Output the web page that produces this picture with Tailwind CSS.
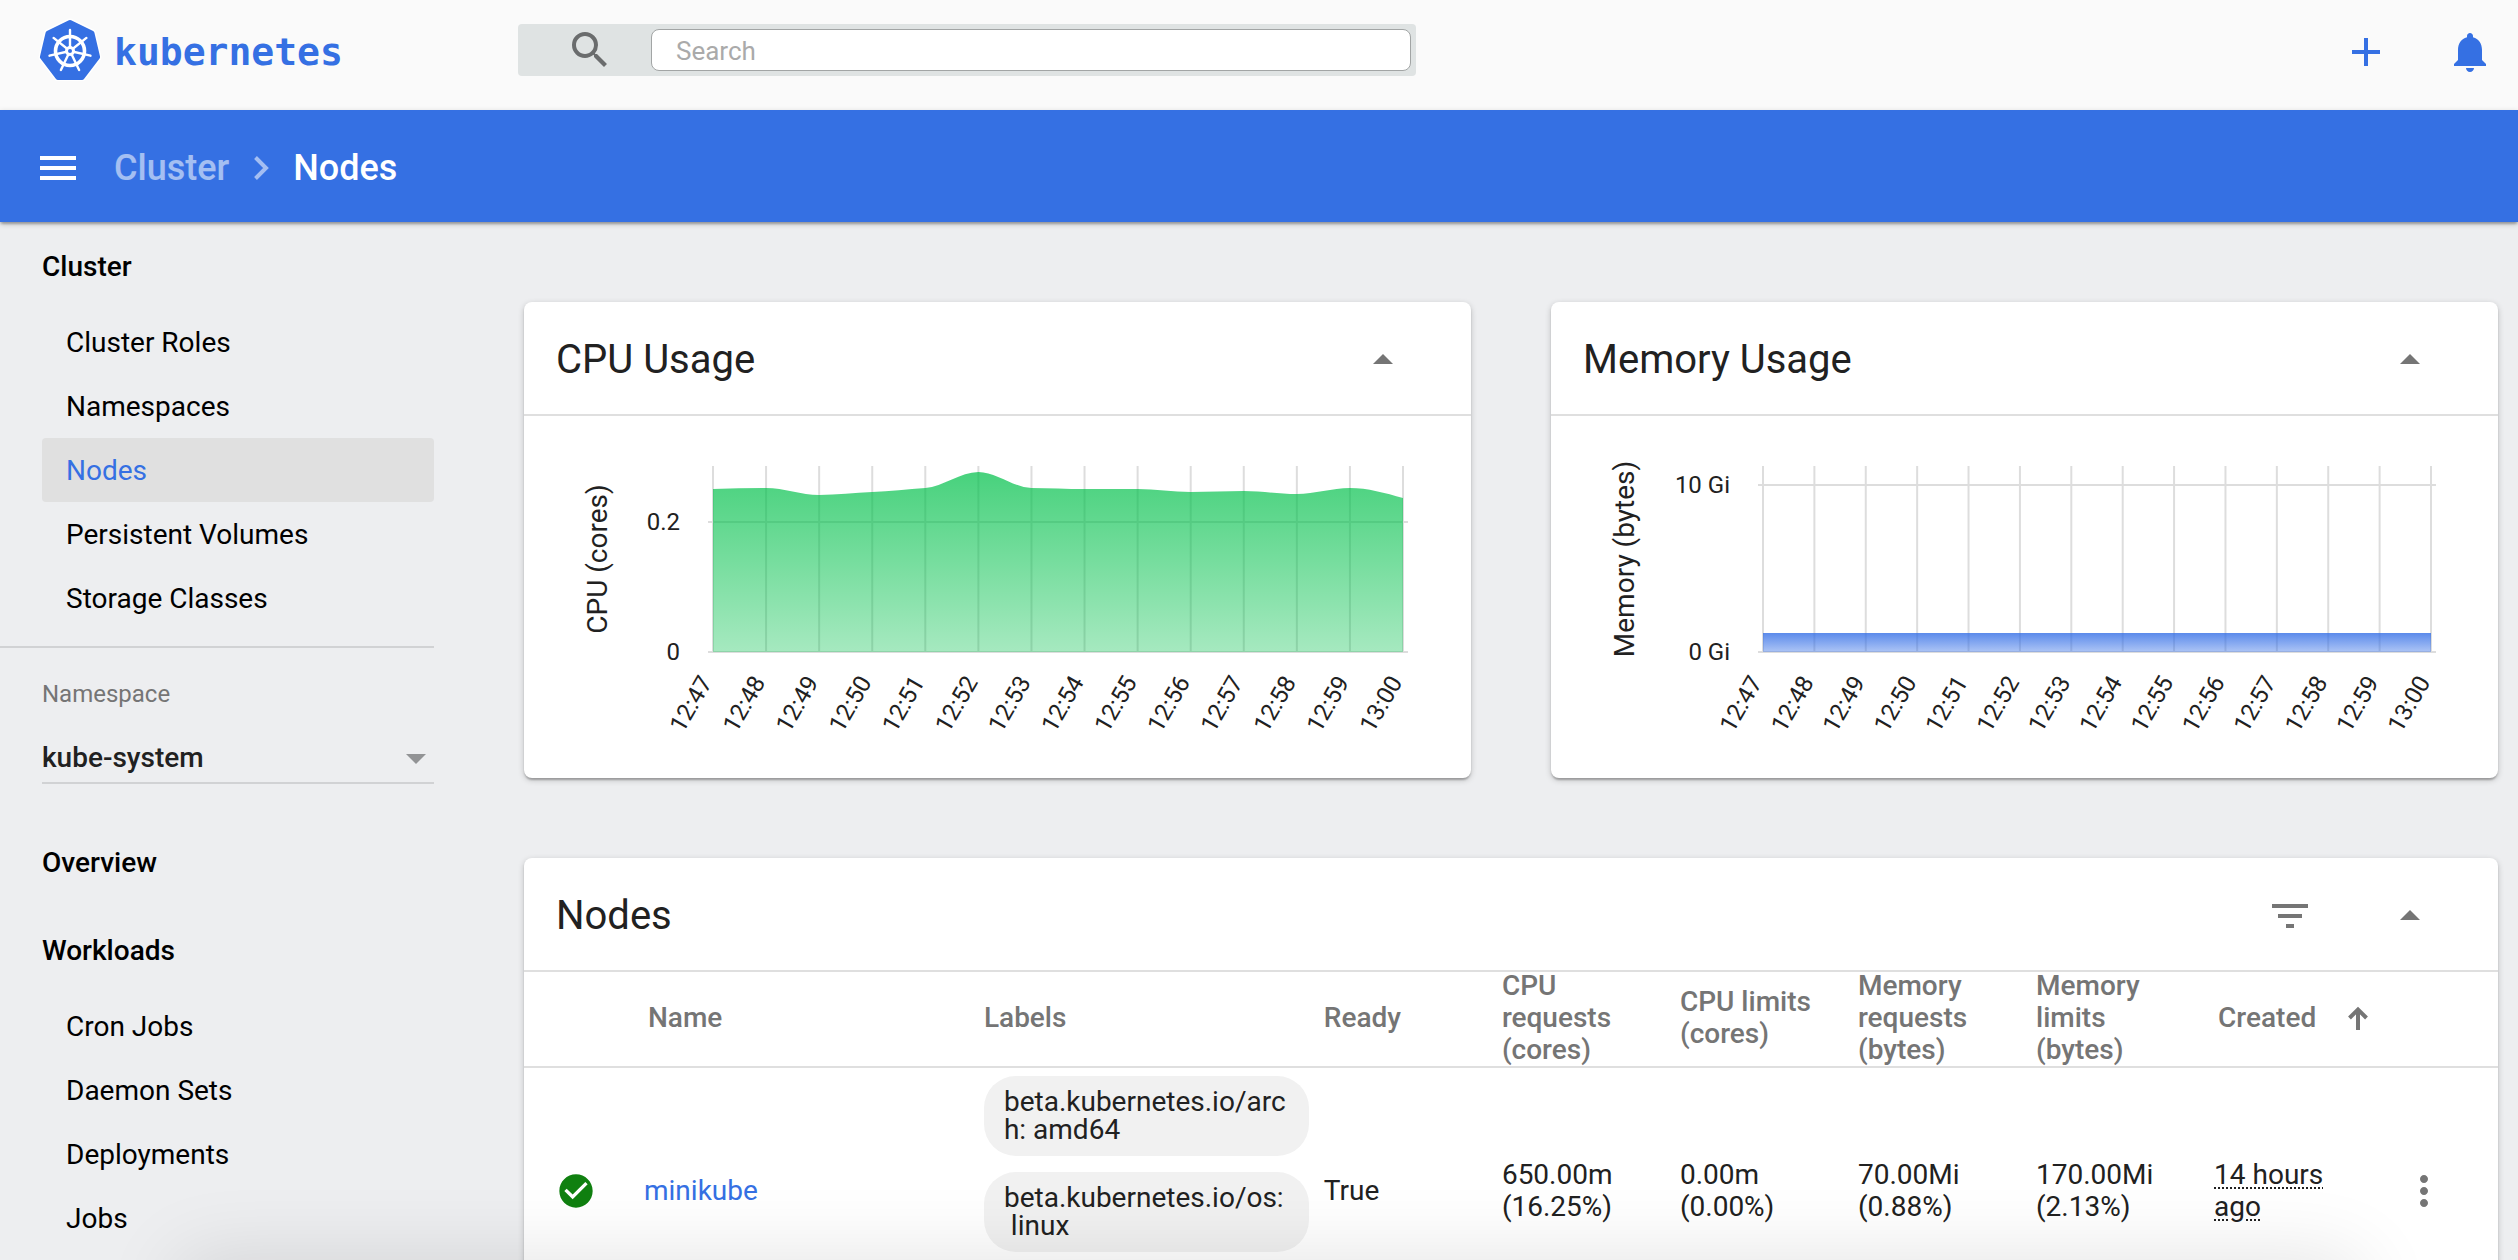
<!DOCTYPE html>
<html lang="en">
<head>
<meta charset="utf-8">
<title>Nodes - Kubernetes Dashboard</title>
<script src="https://cdn.jsdelivr.net/npm/@tailwindcss/browser@4"></script>
</head>
<body class="relative flex h-screen flex-col overflow-hidden bg-[#edeef0] font-['Roboto',sans-serif] text-[28px] leading-8 text-[#212121]">

<header class="flex h-[110px] shrink-0 items-center bg-[#fafafa] pr-6 pb-[10px]">
  <a href="#" class="flex w-[518px] shrink-0 items-center gap-[14px] pl-10 text-[#3570e3]">
    <svg class="size-[60px] overflow-visible" viewBox="0 0 60 60" aria-hidden="true">
      <path d="M30 2 52.500 13 58 37.500 42.500 57.500H17.500L2 37.500 7.500 13Z" fill="#fff" stroke="#fff" stroke-width="7" stroke-linejoin="round"/>
      <path d="M30 2.500 52 13.300 57.600 37 42 57.500H18L2.400 37 8 13.300Z" fill="#3570e3" stroke="#3570e3" stroke-width="5" stroke-linejoin="round"/>
      <g id="wheel" fill="none" stroke="#fff" stroke-linecap="round">
        <circle cx="30" cy="31" r="14.500" stroke-width="3.600"/>
      </g>
      <circle cx="30" cy="31" r="5" fill="#fff"/>
      <circle cx="30" cy="31" r="2" fill="#3570e3"/>
    </svg>
    <span class="pt-1 font-['DejaVu_Sans_Mono',monospace] text-[38px] leading-none font-bold">kubernetes</span>
  </a>
  <form class="flex h-[52px] max-w-[898px] flex-1 items-center rounded bg-[#dfe3e3] pr-[5px] pl-12" role="search">
    <label for="search" class="mr-[37px]" aria-label="Search">
      <svg class="size-12" viewBox="0 0 24 24" fill="#6a6c6d" aria-hidden="true"><path d="M15.500 14h-.79l-.28-.27A6.471 6.471 0 0 0 16 9.500 6.500 6.500 0 1 0 9.500 16c1.610 0 3.090-.59 4.230-1.570l.27.28v.79l5 4.990L20.490 19l-4.990-5zm-6 0C7.010 14 5 11.990 5 9.500S7.010 5 9.500 5 14 7.010 14 9.500 11.990 14 9.500 14z"/></svg>
    </label>
    <input id="search" type="text" placeholder="Search" aria-label="Search" class="h-[42px] min-w-0 flex-1 rounded-lg border border-[#a2a5a5] bg-white px-6 pt-0.5 text-[26px] placeholder:text-[#aaaaaa]">
  </form>
  <div class="ml-auto flex gap-14 pt-1 text-[#3570e3]">
    <button type="button" aria-label="Create"><svg class="size-12" viewBox="0 0 24 24" fill="currentColor"><path d="M19 13h-6v6h-2v-6H5v-2h6V5h2v6h6z"/></svg></button>
    <button type="button" aria-label="Notifications"><svg class="size-12" viewBox="0 0 24 24" fill="currentColor"><path d="M12 22c1.100 0 2-.9 2-2h-4c0 1.100.89 2 2 2zm6-6v-5c0-3.070-1.640-5.640-4.500-6.320V4c0-.83-.67-1.500-1.500-1.500s-1.500.67-1.500 1.500v.68C7.630 5.360 6 7.920 6 11v5l-2 2v1h16v-1l-2-2z"/></svg></button>
  </div>
</header>

<div class="relative flex h-[112px] shrink-0 items-center bg-[#3570e3] pt-1 pl-[34px] text-4xl font-medium text-white shadow-[0_2px_6px_rgba(0,0,0,.2),0_2px_2px_rgba(0,0,0,.14),0_4px_2px_-2px_rgba(0,0,0,.12)]">
  <button type="button" aria-label="Menu"><svg class="size-12" viewBox="0 0 24 24" fill="currentColor"><path d="M3 18h18v-2H3v2zm0-5h18v-2H3v2zm0-7v2h18V6H3z"/></svg></button>
  <nav class="ml-8 flex items-center gap-6" aria-label="Breadcrumb">
    <a href="#" class="text-white/55">Cluster</a>
    <svg class="h-6 w-4" viewBox="0 0 16 24" fill="none" stroke="#fff" stroke-opacity=".55" stroke-width="4" aria-hidden="true"><path d="M2.500 1.500 13 12 2.500 22.500"/></svg>
    <span>Nodes</span>
  </nav>
</div>

<div class="flex min-h-0 flex-1 overflow-hidden">
  <aside class="w-[474px] shrink-0 pr-10 pl-[42px] text-black">
    <nav aria-label="Cluster">
      <a href="#" class="flex h-[88px] items-center pt-0.5 font-medium">Cluster</a>
      <a href="#" class="flex h-16 items-center rounded px-6 pt-0.5">Cluster Roles</a>
      <a href="#" class="flex h-16 items-center rounded px-6 pt-0.5">Namespaces</a>
      <a href="#" class="flex h-16 items-center rounded bg-[#e0e0e0] px-6 pt-0.5 text-[#3570e3]" aria-current="page">Nodes</a>
      <a href="#" class="flex h-16 items-center rounded px-6 pt-0.5">Persistent Volumes</a>
      <a href="#" class="flex h-16 items-center rounded px-6 pt-0.5">Storage Classes</a>
    </nav>
    <hr class="mt-4 -ml-[42px] border-t-2 border-[#d1d2d4]">
    <div class="pt-[30px] pb-[34px]">
      <label for="namespace" class="block text-2xl leading-8 text-[#757575]">Namespace</label>
      <div class="relative mt-6">
        <select id="namespace" class="block h-[50px] w-full appearance-none border-b-2 border-[#d1d2d4] font-medium text-[#212121]">
          <option>kube-system</option>
        </select>
        <svg class="pointer-events-none absolute top-5 right-2 h-[10px] w-5" viewBox="0 0 20 10" fill="#929395" aria-hidden="true"><path d="M0 0h20L10 10z"/></svg>
      </div>
    </div>
    <nav aria-label="Workloads">
      <a href="#" class="flex h-[88px] items-center pt-0.5 font-medium">Overview</a>
      <a href="#" class="flex h-[88px] items-center pt-0.5 font-medium">Workloads</a>
      <a href="#" class="flex h-16 items-center rounded px-6 pt-0.5">Cron Jobs</a>
      <a href="#" class="flex h-16 items-center rounded px-6 pt-0.5">Daemon Sets</a>
      <a href="#" class="flex h-16 items-center rounded px-6 pt-0.5">Deployments</a>
      <a href="#" class="flex h-16 items-center rounded px-6 pt-0.5">Jobs</a>
    </nav>
  </aside>

  <main class="min-w-0 flex-1 pt-20 pr-5 pl-[50px]">
    <div class="grid grid-cols-2 gap-20">
      <section class="rounded-lg bg-white shadow-[0_2px_6px_rgba(0,0,0,.2),0_2px_2px_rgba(0,0,0,.14),0_4px_2px_-2px_rgba(0,0,0,.12)]">
        <div class="flex h-[114px] items-center justify-between border-b-2 border-[#dfdfdf] pt-1 pr-16 pl-8">
          <h2 class="text-[40px]">CPU Usage</h2>
          <button type="button" aria-label="Collapse"><svg class="size-12" viewBox="0 0 24 24" fill="#757575"><path d="m7 14 5-5 5 5z"/></svg></button>
        </div>
        <svg id="cpu" class="block w-full" viewBox="0 0 947 362" role="img" aria-label="CPU usage over time">
          <defs><linearGradient id="green" x1="0" y1="0" x2="0" y2="1"><stop offset="0" stop-color="#00c04a" stop-opacity=".72"/><stop offset="1" stop-color="#00c04a" stop-opacity=".35"/></linearGradient></defs>
        </svg>
      </section>
      <section class="rounded-lg bg-white shadow-[0_2px_6px_rgba(0,0,0,.2),0_2px_2px_rgba(0,0,0,.14),0_4px_2px_-2px_rgba(0,0,0,.12)]">
        <div class="flex h-[114px] items-center justify-between border-b-2 border-[#dfdfdf] pt-1 pr-16 pl-8">
          <h2 class="text-[40px]">Memory Usage</h2>
          <button type="button" aria-label="Collapse"><svg class="size-12" viewBox="0 0 24 24" fill="#757575"><path d="m7 14 5-5 5 5z"/></svg></button>
        </div>
        <svg id="memory" class="block w-full" viewBox="0 0 947 362" role="img" aria-label="Memory usage over time">
          <defs><linearGradient id="blue" x1="0" y1="0" x2="0" y2="1"><stop offset="0" stop-color="#326de6" stop-opacity=".8"/><stop offset="1" stop-color="#326de6" stop-opacity=".4"/></linearGradient></defs>
        </svg>
      </section>
    </div>

    <section class="mt-20 rounded-lg bg-white shadow-[0_2px_6px_rgba(0,0,0,.2),0_2px_2px_rgba(0,0,0,.14),0_4px_2px_-2px_rgba(0,0,0,.12)]">
      <div class="flex h-[114px] items-center border-b-2 border-[#dfdfdf] pt-1 pr-16 pl-8">
        <h2 class="text-[40px]">Nodes</h2>
        <div class="ml-auto flex gap-[72px]">
          <button type="button" aria-label="Filter"><svg class="size-12" viewBox="0 0 24 24" fill="#757575"><path d="M10 18h4v-2h-4v2zM3 6v2h18V6H3zm3 7h12v-2H6v2z"/></svg></button>
          <button type="button" aria-label="Collapse"><svg class="size-12" viewBox="0 0 24 24" fill="#757575"><path d="m7 14 5-5 5 5z"/></svg></button>
        </div>
      </div>
      <table class="-mt-0.5 w-full table-fixed text-left">
        <colgroup>
          <col class="w-[120px]"><col class="w-[17.22%]"><col class="w-[17.22%]"><col class="w-[9.02%]"><col class="w-[9.02%]"><col class="w-[9.02%]"><col class="w-[9.02%]"><col class="w-[9.02%]"><col class="w-[9.02%]"><col>
        </colgroup>
        <thead class="text-[#757575]">
          <tr class="border-b-2 border-[#dfdfdf]">
            <th class="p-0" aria-label="Status"></th>
            <th class="p-0 pl-1 font-medium">Name</th>
            <th class="p-0 font-medium">Labels</th>
            <th class="p-0 font-medium">Ready</th>
            <th class="p-0 pr-6 font-medium">CPU requests (cores)</th>
            <th class="p-0 pr-6 font-medium">CPU limits (cores)</th>
            <th class="p-0 pr-6 font-medium">Memory requests (bytes)</th>
            <th class="p-0 pr-6 font-medium">Memory limits (bytes)</th>
            <th class="p-0 pl-1 font-medium whitespace-nowrap">
              <button type="button" class="flex items-center gap-8">Created
                <svg class="h-6 w-5" viewBox="0 0 20 24" fill="none" stroke="#757575" stroke-width="4" aria-hidden="true"><path d="M10 24V3M1.500 12 10 3.500 18.500 12"/></svg>
              </button>
            </th>
            <th class="p-0" aria-label="Actions"></th>
          </tr>
        </thead>
        <tbody>
          <tr class="h-[246px]">
            <td class="p-0 pl-8"><svg class="size-10" viewBox="0 0 24 24" fill="#108010" role="img" aria-label="Ready"><path d="M12 2C6.480 2 2 6.480 2 12s4.480 10 10 10 10-4.480 10-10S17.520 2 12 2zm-2 15-5-5 1.410-1.410L10 14.170l7.590-7.590L19 8l-9 9z"/></svg></td>
            <td class="p-0"><a href="#" class="text-[#3570e3]">minikube</a></td>
            <td class="p-0 py-2 pr-[15px] align-top">
              <div class="flex flex-col gap-4">
                <span class="rounded-[32px] bg-[#f1f1f1] px-5 py-3 leading-7 break-all">beta.kubernetes.io/arch: amd64</span>
                <span class="rounded-[32px] bg-[#f1f1f1] px-5 py-3 leading-7 break-all">beta.kubernetes.io/os:<br>&nbsp;linux</span>
              </div>
            </td>
            <td class="p-0">True</td>
            <td class="p-0 pr-6">650.00m (16.25%)</td>
            <td class="p-0 pr-6">0.00m (0.00%)</td>
            <td class="p-0 pr-6">70.00Mi (0.88%)</td>
            <td class="p-0 pr-6">170.00Mi (2.13%)</td>
            <td class="p-0 pr-6"><span class="underline decoration-dotted decoration-2 underline-offset-4">14 hours ago</span></td>
            <td class="p-0 pl-2"><button type="button" class="block" aria-label="Actions"><svg class="size-12" viewBox="0 0 24 24" fill="#757575"><path d="M12 8c1.100 0 2-.9 2-2s-.9-2-2-2-2 .9-2 2 .9 2 2 2zm0 2c-1.100 0-2 .9-2 2s.9 2 2 2 2-.9 2-2-.9-2-2-2zm0 6c-1.100 0-2 .9-2 2s.9 2 2 2 2-.9 2-2-.9-2-2-2z"/></svg></button></td>
          </tr>
        </tbody>
      </table>
    </section>
  </main>
</div>

<div class="pointer-events-none absolute top-full right-40 left-[180px] h-20 shadow-[0_0_80px_rgba(0,0,0,.12)]"></div>

<script>
const TIMES = ['12:47','12:48','12:49','12:50','12:51','12:52','12:53','12:54','12:55','12:56','12:57','12:58','12:59','13:00'];
const TOP = 50, BOTTOM = 236;

// Cubic path through the points, kept monotone between neighbours.
function curve(p) {
  const n = p.length, s = [], t = [];
  for (let i = 0; i < n - 1; i++) s.push((p[i + 1][1] - p[i][1]) / (p[i + 1][0] - p[i][0]));
  for (let i = 1; i < n - 1; i++) {
    const a = s[i - 1], b = s[i];
    t[i] = a * b <= 0 ? 0 : Math.sign(a) * Math.min(Math.abs(a), Math.abs(b), Math.abs(a + b) / 4);
  }
  t[0] = (3 * s[0] - t[1]) / 2;
  t[n - 1] = (3 * s[n - 2] - t[n - 2]) / 2;
  let d = `M${p[0]}`;
  for (let i = 0; i < n - 1; i++) {
    const h = (p[i + 1][0] - p[i][0]) / 3;
    d += `C${p[i][0] + h},${p[i][1] + h * t[i]} ${p[i + 1][0] - h},${p[i + 1][1] - h * t[i + 1]} ${p[i + 1]}`;
  }
  return d;
}

function draw(id, o) {
  const x = i => o.left + i * (o.right - o.left) / (TIMES.length - 1);
  let out = '<g stroke="#dddddd" stroke-width="2">';
  TIMES.forEach((_, i) => out += `<path d="M${x(i)} ${TOP}V${BOTTOM}"/>`);
  o.ticks.forEach(k => out += `<path d="M${o.left - 5} ${k.y}H${o.right + 5}"/>`);
  out += '</g>';
  out += `<path d="${curve(o.values.map((v, i) => [x(i), v]))}V${BOTTOM}H${o.left}Z" fill="url(#${o.fill})"/>`;
  out += '<g fill="#212121" font-size="24" text-anchor="end">';
  o.ticks.forEach(k => out += `<text x="${o.left - 33}" y="${k.y + 8}">${k.text}</text>`);
  TIMES.forEach((t, i) => out += `<text transform="translate(${x(i)} 266) rotate(-60)">${t}</text>`);
  out += `</g><text transform="translate(83 143) rotate(-90)" fill="#212121" font-size="28" text-anchor="middle">${o.title}</text>`;
  document.getElementById(id).insertAdjacentHTML('beforeend', out);
}

draw('cpu', { left: 189, right: 879, fill: 'green', title: 'CPU (cores)',
  ticks: [{ y: 106, text: '0.2' }, { y: 236, text: '0' }],
  values: [73, 72, 79, 76, 72, 56, 72, 73, 73, 76, 75, 78, 72, 82] });
draw('memory', { left: 212, right: 880, fill: 'blue', title: 'Memory (bytes)',
  ticks: [{ y: 69, text: '10 Gi' }, { y: 236, text: '0 Gi' }],
  values: TIMES.map(() => 217) });

// Seven spokes on the logo's wheel, each ending in a handle beyond the rim.
let spokes = '';
for (let i = 0; i < 7; i++) spokes += `<path transform="rotate(${i * 360 / 7} 30 31)" d="M30 31V10" stroke-width="2.400"/>`;
document.getElementById('wheel').insertAdjacentHTML('beforeend', spokes);
</script>
</body>
</html>
